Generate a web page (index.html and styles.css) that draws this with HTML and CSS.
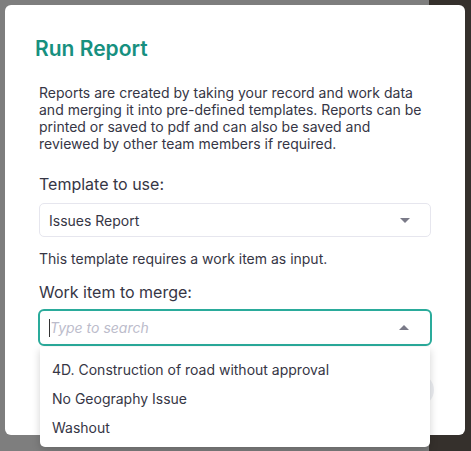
FILE: index.html
```html
<!DOCTYPE html>
<html lang="en">
<head>
  <meta charset="UTF-8" />
  <title>Run Report</title>
  <link rel="stylesheet" href="styles.css">
</head>
<body>

<div class="modal">
  <div class="modal-header">
    <h2>Run Report</h2>
  </div>

  <div class="modal-body">
    <p class="intro">Reports are created by taking your record and work data and merging it into pre-defined templates. Reports can be printed or saved to pdf and can also be saved and reviewed by other team members if required.</p>

    <label class="field-label">Template to use:</label>
    <div class="select">
      <span>Issues Report</span>
      <span class="caret down"></span>
    </div>
    <p class="hint">This template requires a work item as input.</p>

    <label class="field-label">Work item to merge:</label>
    <div class="combo">
      <div class="search">
        <span class="cursor"></span>
        <span class="placeholder">Type to search</span>
        <span class="caret up"></span>
      </div>
      <ul class="menu">
        <li>4D. Construction of road without approval</li>
        <li>No Geography Issue</li>
        <li>Washout</li>
      </ul>
    </div>

    <div class="modal-footer">
      <button class="run-btn">Run</button>
    </div>
  </div>
</div>

</body>
</html>
```

FILE: styles.css
```css
* {
  margin: 0;
  padding: 0;
  box-sizing: border-box;
}
body {
  font-family: Inter, "Noto Sans", sans-serif;
  background: linear-gradient(to right, #7e7e7e 429px, #35302c 429px);
  color: #363645;
  height: 451px;
  overflow: hidden;
  padding: 5px 0 0 5px;
}
.modal {
  width: 460px;
  height: 430px;
  background: #fff;
  border-radius: 6px;
}
.modal-header {
  padding: 31px 30px 0;
}
.modal-header h2 {
  font-size: 21px;
  line-height: 25px;
  font-weight: 600;
  color: #17907f;
}
.modal-body {
  padding: 23px 34px 0;
}
.intro {
  font-size: 14px;
  line-height: 17px;
}
.field-label {
  display: block;
  font-size: 16px;
  line-height: 20px;
  margin-top: 22px;
}
.select {
  display: flex;
  align-items: center;
  justify-content: space-between;
  height: 34px;
  margin-top: 9px;
  padding: 0 20px 0 9px;
  border: 1px solid #e6e6ee;
  border-radius: 5px;
  font-size: 14px;
}
.caret {
  width: 0;
  height: 0;
  border-left: 5px solid transparent;
  border-right: 5px solid transparent;
}
.caret.down {
  border-top: 5px solid #7a7a88;
}
.caret.up {
  border-bottom: 5px solid #7a7a88;
}
.hint {
  font-size: 14px;
  line-height: 17px;
  margin-top: 13px;
}
.hint + .field-label {
  margin-top: 15px;
}
.combo {
  position: relative;
  margin: 7px -1px 0;
}
.search {
  display: flex;
  align-items: center;
  height: 37px;
  padding: 0 21px 0 9px;
  border: 2px solid #2aab9b;
  border-radius: 6px;
}
.cursor {
  width: 1px;
  height: 18px;
  background: #333;
}
.placeholder {
  flex: 1;
  font-size: 14px;
  font-style: italic;
  color: #bcbccb;
}
.menu {
  position: absolute;
  top: 38px;
  left: 2px;
  right: 2px;
  list-style: none;
  background: #fff;
  border-radius: 0 0 5px 5px;
  box-shadow: 0 3px 8px rgba(0,0,0,0.18);
  padding: 8px 0 5px;
  z-index: 2;
}
.menu li {
  font-size: 14px;
  line-height: 29px;
  padding: 0 12px;
}
.modal-footer {
  display: flex;
  justify-content: flex-end;
  margin: 28px -3px 0 0;
}
.run-btn {
  width: 80px;
  height: 32px;
  border: none;
  border-radius: 16px;
  background: #eceef2;
  color: #888;
  font-family: inherit;
  font-size: 14px;
}
```
